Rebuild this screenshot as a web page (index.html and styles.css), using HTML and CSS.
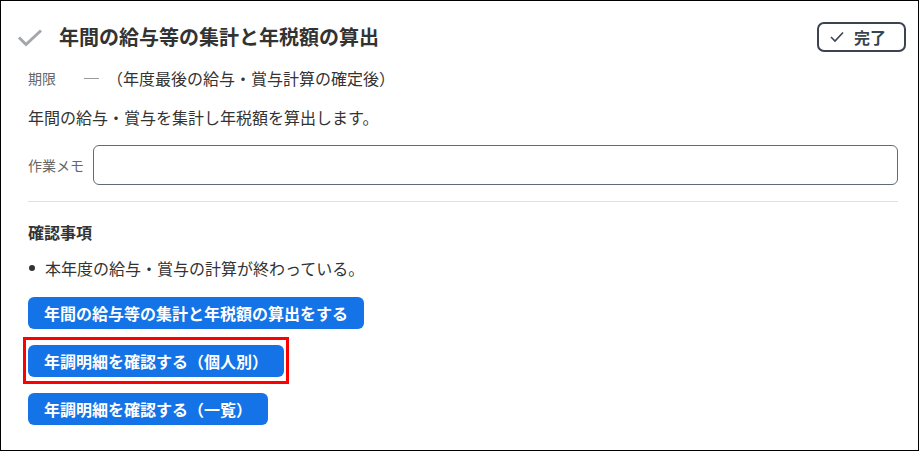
FILE: index.html
```html
<!DOCTYPE html>
<html lang="ja">
<head>
<meta charset="utf-8">
<link rel="stylesheet" href="styles.css">
</head>
<body>
<div class="card">
  <div class="header">
    <svg class="done-mark" width="26" height="20" viewBox="0 0 26 20"><path d="M2 9.5 L9 16.5 L24 2.5" fill="none" stroke="#a3a7ab" stroke-width="3"/></svg>
    <h1 class="title">年間の給与等の集計と年税額の算出</h1>
    <button class="complete-btn"><svg width="14" height="12" viewBox="0 0 14 12"><path d="M1 6 L5 10 L13 1.5" fill="none" stroke="#3c4550" stroke-width="1.6"/></svg><span>完了</span></button>
  </div>
  <div class="body">
    <div class="deadline">
      <span class="label">期限</span>
      <span class="dash"></span>
      <span class="deadline-text">（年度最後の給与・賞与計算の確定後）</span>
    </div>
    <p class="desc">年間の給与・賞与を集計し年税額を算出します。</p>
    <div class="memo">
      <span class="label memo-label">作業メモ</span>
      <div class="memo-input"></div>
    </div>
    <hr class="divider">
    <h2 class="section-title">確認事項</h2>
    <ul class="checks">
      <li>本年度の給与・賞与の計算が終わっている。</li>
    </ul>
    <div class="actions">
      <div><button class="action">年間の給与等の集計と年税額の算出をする</button></div>
      <div class="highlight"><button class="action">年調明細を確認する（個人別）</button></div>
      <div><button class="action">年調明細を確認する（一覧）</button></div>
    </div>
  </div>
</div>
</body>
</html>
```

FILE: styles.css
```css
* { box-sizing: border-box; }
html, body { margin: 0; padding: 0; background: #fff; }
body { font-family: "Noto Sans CJK JP", "Noto Sans", sans-serif; color: #333; }
.card {
  width: 919px;
  height: 451px;
  border: 1px solid #000;
  background: #fff;
}
.header {
  display: flex;
  align-items: center;
  padding: 21px 12px 0 16px;
  height: 51px;
}
.done-mark { display: block; margin-top: 1px; }
.title {
  margin: 0 0 0 16px;
  font-size: 20px;
  font-weight: 700;
  line-height: 30px;
  color: #333;
  flex: 1;
}
.complete-btn {
  display: flex;
  align-items: center;
  gap: 10px;
  height: 30px;
  width: 89px;
  padding: 0 0 0 11px;
  border: 2px solid #3a434e;
  border-radius: 7px;
  background: #fff;
  font-family: inherit;
  font-size: 16px;
  font-weight: 700;
  color: #3a434e;
}
.complete-btn svg { display: block; }
.body { padding: 14px 20px 0 27px; }
.deadline {
  display: flex;
  align-items: center;
  height: 24px;
}
.label { font-size: 14px; color: #666; }
.deadline .label { width: 56px; }
.dash {
  display: block;
  width: 15px;
  height: 1px;
  background: #999;
}
.deadline-text { font-size: 16px; margin-left: 8px; }
.desc {
  margin: 15px 0 0 0;
  font-size: 16px;
  line-height: 24px;
}
.memo {
  display: flex;
  align-items: center;
  margin-top: 16px;
}
.memo-label { width: 65px; }
.memo-input {
  flex: 1;
  height: 40px;
  border: 1px solid #5f6b77;
  border-radius: 6px;
}
.divider {
  margin: 16px 0 0 0;
  border: 0;
  border-top: 1px solid #e0e0e0;
  height: 0;
}
.section-title {
  margin: 18px 0 0 0;
  font-size: 16px;
  font-weight: 700;
  line-height: 24px;
}
.checks {
  list-style: none;
  margin: 12px 0 0 0;
  padding: 0;
}
.checks li {
  position: relative;
  padding-left: 17px;
  font-size: 16px;
  line-height: 24px;
}
.checks li::before {
  content: "";
  position: absolute;
  left: 1px;
  top: 9px;
  width: 6px;
  height: 6px;
  border-radius: 50%;
  background: #333;
}
.actions {
  display: flex;
  flex-direction: column;
  align-items: flex-start;
  gap: 16px;
  margin-top: 17px;
}
.actions > div { display: flex; }
.action {
  height: 32px;
  padding: 0 16px;
  border: 0;
  border-radius: 6px;
  background: #1473e6;
  color: #fff;
  font-family: inherit;
  font-size: 16px;
  font-weight: 700;
  line-height: 32px;
}
.highlight {
  position: relative;
}
.highlight::after {
  content: "";
  position: absolute;
  left: -5px;
  top: -8px;
  right: -5px;
  bottom: -7px;
  border: 3px solid #f00;
}
```
